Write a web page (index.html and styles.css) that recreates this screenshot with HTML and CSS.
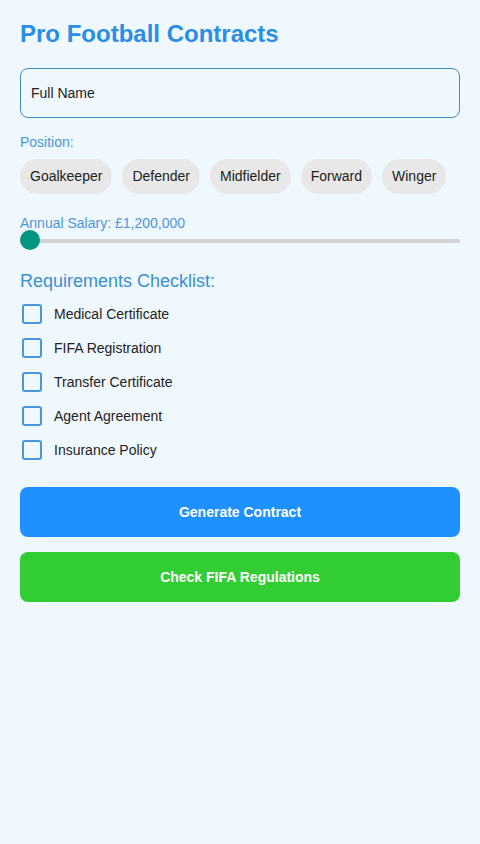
FILE: index.html
```html
<!DOCTYPE html>
<html lang="en">
<head>
	<meta charset="UTF-8">
	<title>Pro Football Contracts</title>
	<link rel="stylesheet" href="styles.css">
</head>
<body>
	<div class="container">
		<h1>Pro Football Contracts</h1>
		<input type="text" class="full-name" placeholder="Full Name">

		<div class="label">Position:</div>
		<div class="positions">
			<span class="chip">Goalkeeper</span>
			<span class="chip">Defender</span>
			<span class="chip">Midfielder</span>
			<span class="chip">Forward</span>
			<span class="chip">Winger</span>
		</div>

		<div class="label salary">Annual Salary: £1,200,000</div>
		<div class="slider">
			<div class="track"></div>
			<div class="thumb"></div>
		</div>

		<h2>Requirements Checklist:</h2>
		<ul class="checklist">
			<li><span class="box"></span>Medical Certificate</li>
			<li><span class="box"></span>FIFA Registration</li>
			<li><span class="box"></span>Transfer Certificate</li>
			<li><span class="box"></span>Agent Agreement</li>
			<li><span class="box"></span>Insurance Policy</li>
		</ul>

		<button class="btn btn-blue">Generate Contract</button>
		<button class="btn btn-green">Check FIFA Regulations</button>
	</div>
</body>
</html>
```

FILE: styles.css
```css
*{padding:0;margin:0;box-sizing:border-box;}
body{
	background:#f0f8ff;
	font-family:"Liberation Sans", Arial, sans-serif;
	color:#222;
}
.container{
	padding:20px;
}
h1{
	font-size:24px;
	line-height:28px;
	color:#2a8de6;
	margin-bottom:20px;
}
.full-name{
	display:block;
	width:100%;
	height:50px;
	padding:0 10px;
	border:1px solid #3c8fc6;
	border-radius:8px;
	background:#f0f8ff;
	font-family:inherit;
	font-size:14px;
	outline:none;
}
.full-name::placeholder{color:#222;}
.label{
	font-size:14px;
	line-height:16px;
	color:#4a96dc;
	margin-top:16px;
}
.positions{
	display:flex;
	gap:10px;
	margin-top:9px;
}
.chip{
	display:inline-block;
	height:35px;
	line-height:35px;
	padding:0 10px;
	background:#e8e8e8;
	border-radius:18px;
	font-size:14px;
}
.label.salary{margin-top:21px;}
.slider{
	position:relative;
	height:20px;
}
.track{
	position:absolute;
	left:0;
	right:0;
	top:8px;
	height:4px;
	background:#d3d3d3;
	border-radius:2px;
}
.thumb{
	position:absolute;
	left:0;
	top:-1px;
	width:20px;
	height:20px;
	border-radius:50%;
	background:#00967f;
}
h2{
	font-size:18px;
	font-weight:normal;
	line-height:22px;
	color:#3a8fd6;
	margin-top:19px;
}
.checklist{
	list-style:none;
	margin-top:5px;
}
.checklist li{
	display:flex;
	align-items:center;
	height:34px;
	font-size:14px;
}
.box{
	width:20px;
	height:20px;
	margin:0 12px 0 2px;
	border:2px solid #4a96dc;
	border-radius:3px;
	background:#f0f8ff;
}
.btn{
	display:block;
	width:100%;
	height:50px;
	border:none;
	border-radius:8px;
	color:#fff;
	font-family:inherit;
	font-size:14px;
	font-weight:bold;
}
.btn-blue{
	background:#1e90ff;
	margin-top:20px;
}
.btn-green{
	background:#32cd32;
	margin-top:15px;
}
```
